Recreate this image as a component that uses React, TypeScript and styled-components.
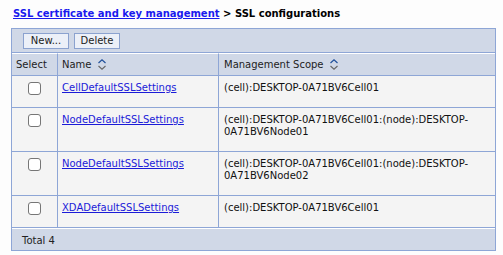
import React from "react";
import styled, { createGlobalStyle } from "styled-components";

const GlobalStyle = createGlobalStyle`
  html, body {
    margin: 0;
    padding: 0;
    background: #fdfdfd;
  }
  body {
    font-family: "DejaVu Sans", Verdana, sans-serif;
    font-size: 10px;
    color: #000;
  }
`;

type Row = { name: string; scope: string[] };

const rows: Row[] = [
  { name: "CellDefaultSSLSettings", scope: ["(cell):DESKTOP-0A71BV6Cell01"] },
  { name: "NodeDefaultSSLSettings", scope: ["(cell):DESKTOP-0A71BV6Cell01:(node):DESKTOP-", "0A71BV6Node01"] },
  { name: "NodeDefaultSSLSettings", scope: ["(cell):DESKTOP-0A71BV6Cell01:(node):DESKTOP-", "0A71BV6Node02"] },
  { name: "XDADefaultSSLSettings", scope: ["(cell):DESKTOP-0A71BV6Cell01"] },
];

/** up/down chevrons shown next to sortable column titles */
const SortIcon = () => (
  <SortSvg width="8" height="11" viewBox="0 0 8 11">
    <path d="M0.5 4 L4 0.8 L7.5 4" fill="none" stroke="#1f4f9a" strokeWidth="1.2" />
    <path d="M0.5 7 L4 10.2 L7.5 7" fill="none" stroke="#666" strokeWidth="1.1" />
  </SortSvg>
);

const App = () => {
  return <Page>
    <GlobalStyle />
    <Breadcrumb>
      <CrumbLink href="#">SSL certificate and key management</CrumbLink>
      <span> &gt; SSL configurations</span>
    </Breadcrumb>
    <Table>
      <colgroup>
        <col style={{ width: 45 }} />
        <col style={{ width: 161 }} />
        <col />
      </colgroup>
      <thead>
        <tr>
          <ToolbarCell colSpan={3}>
            <ToolButton>New...</ToolButton>
            <ToolButton>Delete</ToolButton>
          </ToolbarCell>
        </tr>
        <tr>
          <HeadCell>Select</HeadCell>
          <HeadCell>
            <HeadLabel>Name <SortIcon /></HeadLabel>
          </HeadCell>
          <HeadCell>
            <HeadLabel>Management Scope <SortIcon /></HeadLabel>
          </HeadCell>
        </tr>
      </thead>
      <tbody>
        {rows.map((r, i) => (
          <tr key={i}>
            <SelectCell><Check type="checkbox" /></SelectCell>
            <BodyCell><ItemLink href="#">{r.name}</ItemLink></BodyCell>
            <BodyCell>{r.scope.map((s, j) => <div key={j}>{s}</div>)}</BodyCell>
          </tr>
        ))}
        <tr>
          <FooterCell colSpan={3}>Total 4</FooterCell>
        </tr>
      </tbody>
    </Table>
  </Page>
}

export default App;

const Page = styled.div`
  width: 503px;
  height: 255px;
  padding: 7px 0 0 11px;
  box-sizing: border-box;
`

const Breadcrumb = styled.div`
  font-weight: bold;
  font-size: 10px;
  line-height: 13px;
  padding-left: 2px;
  height: 21px;
`

const CrumbLink = styled.a`
  color: #1a1aee;
  text-decoration: underline;
`

const Table = styled.table`
  width: 485px;
  table-layout: fixed;
  border-collapse: separate;
  border-spacing: 0;
  border: 1px solid #8ea6d6;
  background: #f4f4f4;
`

const ToolbarCell = styled.td`
  background: #d0d8e7;
  height: 23px;
  padding: 0 0 0 11px;
  border-bottom: 1px solid #8ea6d6;
  vertical-align: middle;
  & > button + button { margin-left: 5px; }
`

const ToolButton = styled.button`
  font-family: "DejaVu Sans", Verdana, sans-serif;
  font-size: 10px;
  color: #222;
  width: 46px;
  height: 16px;
  padding: 0;
  background: #ecf0f8;
  border: 1px solid #8ba2cf;
  border-radius: 0;
  text-align: center;
`

const HeadCell = styled.th`
  background: #d0d8e7;
  font-weight: normal;
  text-align: left;
  height: 21px;
  padding: 0 4px;
  color: #1d1d1d;
  border-top: 1px solid #fff;
  border-bottom: 1px solid #8ea6d6;
  & + & { border-left: 1px solid #8ea6d6; }
  &:last-child { padding-left: 5px; }
`

const HeadLabel = styled.span`
  display: inline-flex;
  align-items: center;
  gap: 6px;
`

const SortSvg = styled.svg`
  display: block;
`

const BodyCell = styled.td`
  vertical-align: top;
  padding: 6px 4px 13px;
  line-height: 12px;
  border-left: 1px solid #8ea6d6;
  border-bottom: 1px solid #8ea6d6;
  color: #111;
  white-space: nowrap;
  &:last-child { padding-left: 5px; }
`

const SelectCell = styled.td`
  vertical-align: top;
  text-align: center;
  padding: 6px 0 0;
  border-bottom: 1px solid #8ea6d6;
`

const Check = styled.input`
  appearance: none;
  width: 13px;
  height: 13px;
  margin: 0;
  border: 1px solid #767676;
  border-radius: 3px;
  background: #fff;
  display: inline-block;
  vertical-align: top;
`

const ItemLink = styled.a`
  color: #1b1bd8;
  text-decoration: underline;
`

const FooterCell = styled.td`
  background: #d0d8e7;
  border-top: 1px solid #fff;
  height: 20px;
  padding: 1px 10px 0;
  color: #222;
`
